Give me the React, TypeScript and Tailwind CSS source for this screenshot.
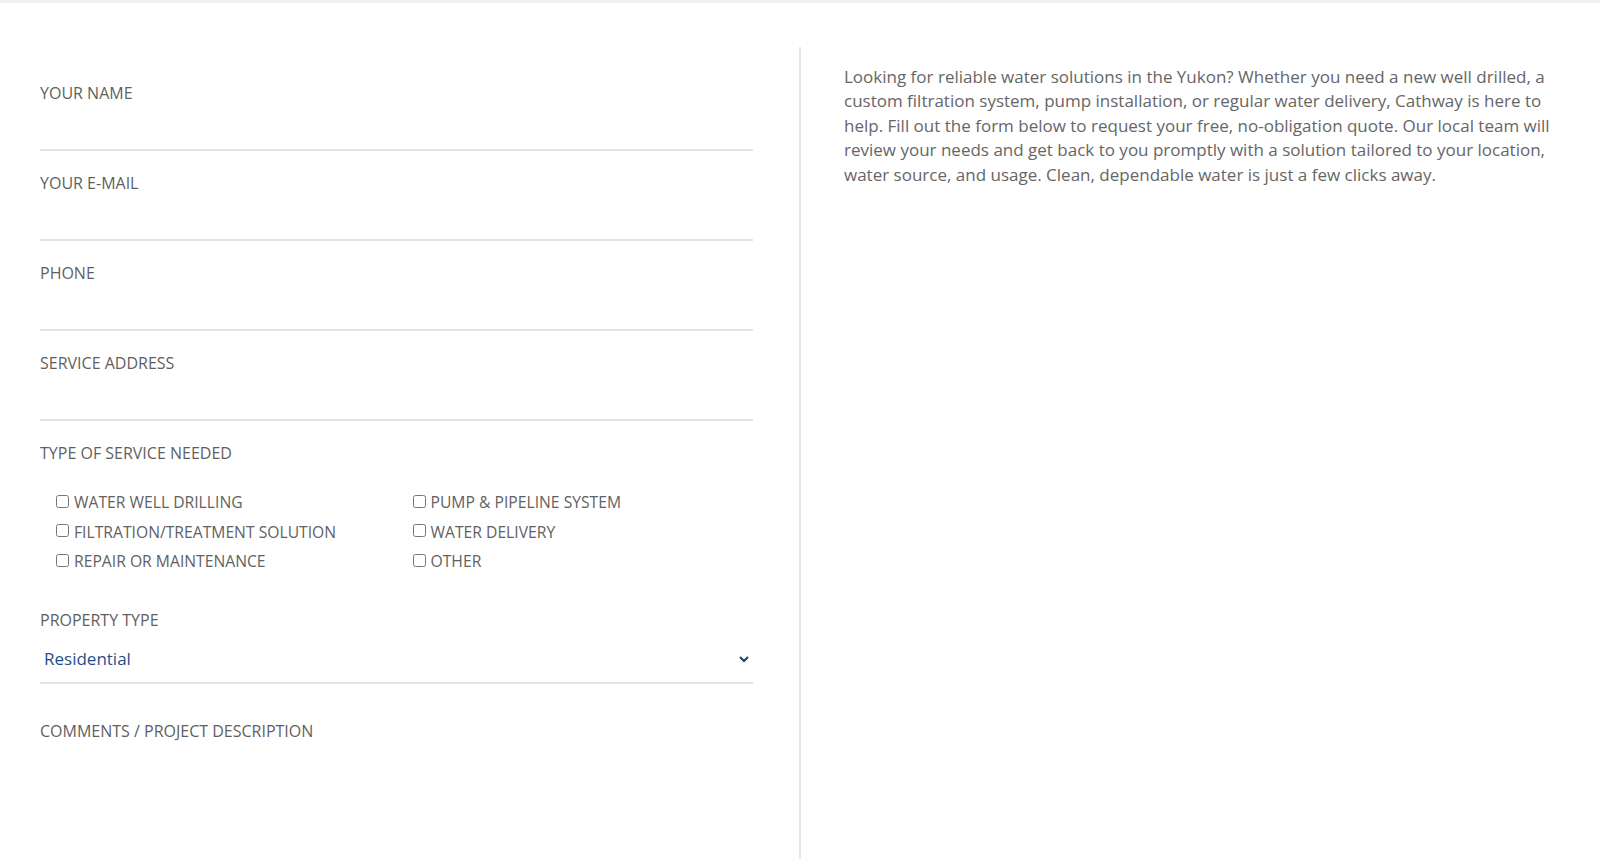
import { useState } from 'react'

const services = [
  'Water Well Drilling',
  'Pump & Pipeline System',
  'Filtration/Treatment Solution',
  'Water Delivery',
  'Repair or Maintenance',
  'Other',
]

function TextField({ label, type = 'text' }: { label: string; type?: string }) {
  return (
    <div className="mb-[21px]">
      <label className="block text-[16px] leading-[22px] uppercase text-[#5f5f5f]">{label}</label>
      <input
        type={type}
        className="mt-1 block h-[43px] w-full border-b-2 border-[#e4e4e4] bg-transparent outline-none"
      />
    </div>
  )
}

export default function App() {
  const [checked, setChecked] = useState<Record<string, boolean>>({})
  const [property, setProperty] = useState('Residential')

  return (
    <div
      className="h-[859px] overflow-hidden border-t-[3px] border-[#f0f0f0] bg-white"
      style={{ fontFamily: '"Open Sans", "Liberation Sans", sans-serif' }}
    >
      <div className="flex h-full pt-[44px]">
        {/* form column */}
        <div className="w-[799px] pl-10 pr-[46px] pt-[34.5px]">
          <TextField label="Your Name" />
          <TextField label="Your E-mail" type="email" />
          <TextField label="Phone" type="tel" />
          <TextField label="Service Address" />

          <div>
            <div className="text-[16px] leading-[22px] uppercase text-[#5f5f5f]">Type of Service Needed</div>
            <div className="mt-[25px] grid grid-cols-2">
              {services.map((s) => (
                <label key={s} className="flex h-[29.5px] items-center pl-4 text-[15.7px] uppercase text-[#626262]">
                  <input
                    type="checkbox"
                    checked={!!checked[s]}
                    onChange={() => setChecked({ ...checked, [s]: !checked[s] })}
                    className="m-0 mr-[5px] -mt-[4px] h-[13px] w-[13px]"
                  />
                  <span>{s}</span>
                </label>
              ))}
            </div>
          </div>

          <div className="mt-[31.5px]">
            <div className="text-[16px] leading-[22px] uppercase text-[#5f5f5f]">Property Type</div>
            <div className="relative mt-1 border-b-2 border-[#e4e4e4]">
              <select
                value={property}
                onChange={(e) => setProperty(e.target.value)}
                className="block h-[47.5px] w-full appearance-none bg-transparent pl-1 text-[17px] text-[#24508a] outline-none"
              >
                <option>Residential</option>
                <option>Commercial</option>
                <option>Agricultural</option>
                <option>Industrial</option>
              </select>
              <svg
                className="pointer-events-none absolute right-[4px] top-[21px]"
                width="10"
                height="7"
                viewBox="0 0 10 7"
              >
                <path d="M1.5 1.5 L5 5 L8.5 1.5" fill="none" stroke="#1f3f66" strokeWidth="2" strokeLinecap="round" />
              </svg>
            </div>
          </div>

          <div className="mt-[36px]">
            <div className="text-[16px] leading-[22px] uppercase text-[#5f5f5f]">Comments / Project Description</div>
            <textarea className="mt-1 block h-[160px] w-full resize-none border-b-2 border-[#e4e4e4] outline-none" />
          </div>
        </div>

        <div className="w-[2px] shrink-0 bg-[#e6e6e6]" />

        {/* intro copy */}
        <div className="flex-1 pl-[43px] pr-[44px] pt-[18px]">
          <p className="text-[17px] leading-[24.4px] text-[#666666]">
            Looking for reliable water solutions in the Yukon? Whether you need a new well drilled, a custom
            filtration system, pump installation, or regular water delivery, Cathway is here to help. Fill out the
            form below to request your free, no-obligation quote. Our local team will review your needs and get back
            to you promptly with a solution tailored to your location, water source, and usage. Clean, dependable
            water is just a few clicks away.
          </p>
        </div>
      </div>
    </div>
  )
}
